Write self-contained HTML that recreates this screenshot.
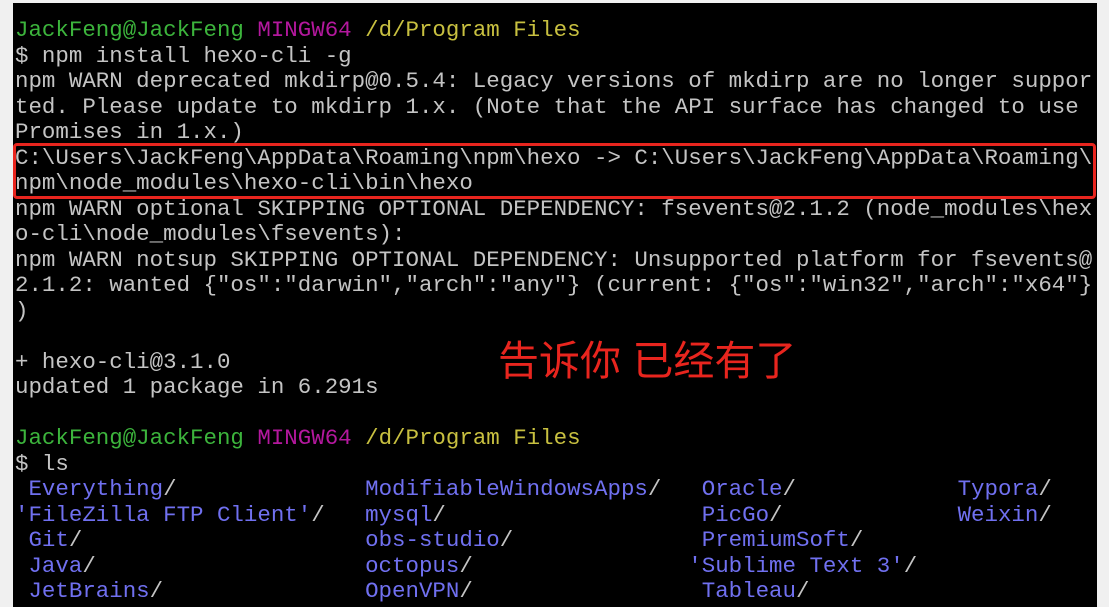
<!DOCTYPE html>
<html><head><meta charset="utf-8"><style>
html,body{margin:0;padding:0;width:1109px;height:607px;overflow:hidden;background:#f0f0f0;}
#t{position:absolute;left:13px;top:3px;width:1084px;height:604px;background:#000;}
pre{position:absolute;left:15px;top:18px;margin:0;font-family:"Liberation Mono",monospace;font-size:22.45px;line-height:25.5px;color:#c4c4c4;white-space:pre;}
.g{color:#3cb43c}.m{color:#b4189e}.y{color:#c8c040}.b{color:#7070f0}
#box{position:absolute;left:13px;top:143px;width:1077px;height:50px;border:3px solid #e8251e;border-radius:4px;}
#cn{position:absolute;left:498px;top:336px;font-family:"Liberation Sans","Noto Sans CJK SC",sans-serif;font-size:41px;line-height:50px;color:#e8251e;white-space:nowrap;}
</style></head><body>
<div id="t"></div>
<pre><span class="g">JackFeng@JackFeng</span> <span class="m">MINGW64</span> <span class="y">/d/Program Files</span>
$ npm install hexo-cli -g
npm WARN deprecated mkdirp@0.5.4: Legacy versions of mkdirp are no longer suppor
ted. Please update to mkdirp 1.x. (Note that the API surface has changed to use
Promises in 1.x.)
C:\Users\JackFeng\AppData\Roaming\npm\hexo -&gt; C:\Users\JackFeng\AppData\Roaming\
npm\node_modules\hexo-cli\bin\hexo
npm WARN optional SKIPPING OPTIONAL DEPENDENCY: fsevents@2.1.2 (node_modules\hex
o-cli\node_modules\fsevents):
npm WARN notsup SKIPPING OPTIONAL DEPENDENCY: Unsupported platform for fsevents@
2.1.2: wanted {"os":"darwin","arch":"any"} (current: {"os":"win32","arch":"x64"}
)

+ hexo-cli@3.1.0
updated 1 package in 6.291s

<span class="g">JackFeng@JackFeng</span> <span class="m">MINGW64</span> <span class="y">/d/Program Files</span>
$ ls
 <span class="b">Everything</span>/              <span class="b">ModifiableWindowsApps</span>/   <span class="b">Oracle</span>/            <span class="b">Typora</span>/
<span class="b">'FileZilla FTP Client'</span>/   <span class="b">mysql</span>/                   <span class="b">PicGo</span>/             <span class="b">Weixin</span>/
 <span class="b">Git</span>/                     <span class="b">obs-studio</span>/              <span class="b">PremiumSoft</span>/
 <span class="b">Java</span>/                    <span class="b">octopus</span>/                <span class="b">'Sublime Text 3'</span>/
 <span class="b">JetBrains</span>/               <span class="b">OpenVPN</span>/                 <span class="b">Tableau</span>/</pre>
<div id="box"></div>
<div id="cn">告诉你 已经有了</div>
</body></html>
